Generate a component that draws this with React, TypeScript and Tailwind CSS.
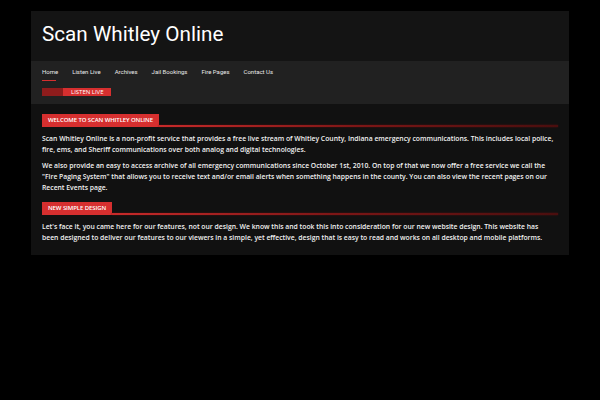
import React from 'react';

const navItems = ['Home', 'Listen Live', 'Archives', 'Jail Bookings', 'Fire Pages', 'Contact Us'];

function SectionTag({ label }: { label: string }) {
  return (
    <div className="flex items-end">
      <div className="bg-[#d62f2f] h-[13px] px-[6px] flex items-center text-[6px] text-white uppercase font-['Open_Sans',sans-serif] tracking-[-0.1px]">
        {label}
      </div>
      <div className="flex-1 h-[2px] bg-gradient-to-r from-[#c92a2a] via-[#7d1616] to-[#4a0e0e] shadow-[0_0_2px_#5a1010]" />
    </div>
  );
}

export default function App() {
  return (
    <div className="min-h-screen bg-black pt-[11px] font-['Open_Sans',sans-serif]">
      <div className="ml-[31px] w-[538px]">
        <header className="h-[50px] bg-[#141414] px-[11px] flex items-center">
          <h1 className="text-[20.7px] text-white font-['Roboto',sans-serif] leading-none pb-[3px]">
            Scan Whitley Online
          </h1>
        </header>

        <nav className="h-[43px] bg-[#212121] px-[11px] pt-[6px]">
          <ul className="flex gap-[14px] font-['Roboto',sans-serif] text-[6px] leading-[9px] text-[#e8e8e8]">
            {navItems.map((item, i) => (
              <li key={item} className="flex flex-col">
                <span>{item}</span>
                {i === 0 && <span className="mt-[4px] h-[1px] w-[14px] bg-[#d62f2f]" />}
              </li>
            ))}
          </ul>
          <div className="mt-[7px] flex h-[8px] w-[69px]">
            <div className="w-[21px] bg-[#8e1c1c]" />
            <div className="flex-1 bg-[#d62f2f] flex items-center pl-[8px] text-[6px] text-white font-['Open_Sans',sans-serif] leading-none">
              LISTEN LIVE
            </div>
          </div>
        </nav>

        <main className="bg-[#111111] px-[11px] pt-[10px] pb-[12px] text-[6.8px] leading-[11px] text-[#f2f2f2] font-semibold">
          <SectionTag label="Welcome to Scan Whitley Online" />
          <p className="mt-[6px] pr-[4px]">
            Scan Whitley Online is a non-profit service that provides a free live stream of Whitley County, Indiana emergency communications. This includes local police, fire, ems, and Sheriff communications over both analog and digital technologies.
          </p>
          <p className="mt-[5px] pr-[4px]">
            We also provide an easy to access archive of all emergency communications since October 1st, 2010. On top of that we now offer a free service we call the "Fire Paging System" that allows you to receive text and/or email alerts when something happens in the county. You can also view the recent pages on our Recent Events page.
          </p>
          <div className="mt-[9px]">
            <SectionTag label="New Simple Design" />
          </div>
          <p className="mt-[6px] pr-[4px]">
            Let's face it, you came here for our features, not our design. We know this and took this into consideration for our new website design. This website has been designed to deliver our features to our viewers in a simple, yet effective, design that is easy to read and works on all desktop and mobile platforms.
          </p>
        </main>
      </div>
    </div>
  );
}
